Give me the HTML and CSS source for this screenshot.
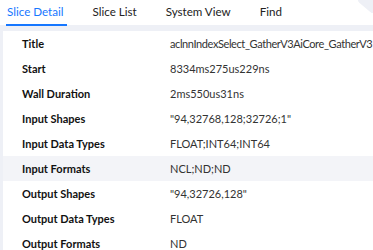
FILE: index.html
```html
<!doctype html>
<html lang="en">
  <head>
    <meta charset="UTF-8" />
    <meta name="viewport" content="width=device-width, initial-scale=1.0" />
    <title>Slice Detail</title>
    <link rel="stylesheet" href="styles.css">
  </head>
  <body>
    <div class="tabs">
      <div class="tab active">Slice Detail</div>
      <div class="tab">Slice List</div>
      <div class="tab">System View</div>
      <div class="tab">Find</div>
      <div class="corner"></div>
    </div>

    <div class="panel">
      <div class="detail">
        <div class="row"><span class="label">Title</span><span class="value title">aclnnIndexSelect_GatherV3AiCore_GatherV3</span></div>
        <div class="row"><span class="label">Start</span><span class="value">8334ms275us229ns</span></div>
        <div class="row"><span class="label">Wall Duration</span><span class="value">2ms550us31ns</span></div>
        <div class="row"><span class="label">Input Shapes</span><span class="value">"94,32768,128;32726;1"</span></div>
        <div class="row"><span class="label">Input Data Types</span><span class="value">FLOAT;INT64;INT64</span></div>
        <div class="row hover"><span class="label">Input Formats</span><span class="value">NCL;ND;ND</span></div>
        <div class="row"><span class="label">Output Shapes</span><span class="value">"94,32726,128"</span></div>
        <div class="row"><span class="label">Output Data Types</span><span class="value">FLOAT</span></div>
        <div class="row"><span class="label">Output Formats</span><span class="value">ND</span></div>
      </div>
    </div>
  </body>
</html>
```

FILE: styles.css
```css
body {
  margin: 0;
  background-color: #eef0f6;
  font-family: Lato, 'Noto Sans', sans-serif;
  overflow: hidden;
}

.tabs {
  position: relative;
  display: flex;
  height: 25px;
  padding-left: 7px;
  gap: 29px;
  background-color: #fff;
}

.tab {
  position: relative;
  font-size: 11.6px;
  line-height: 24px;
  color: #222;
}

.tab.active {
  color: #1677ff;
}

.tab.active::after {
  content: '';
  position: absolute;
  left: -1px;
  right: -3px;
  bottom: -1px;
  height: 2px;
  background-color: #1677ff;
}

/* 오른쪽 위 모서리 */
.corner {
  position: absolute;
  top: -12px;
  right: -10px;
  width: 22px;
  height: 22px;
  border-radius: 4px;
  background-color: #eef0f6;
  transform: rotate(40deg);
}

.panel {
  padding: 6px 0 0 3px;
}

.detail {
  background-color: #fff;
}

.row {
  display: grid;
  grid-template-columns: 148px 1fr;
  height: 25px;
  line-height: 25px;
  padding-left: 19px;
  white-space: nowrap;
}

.row.hover {
  background-color: #f3f4f8;
}

.label {
  font-size: 11px;
  font-weight: bold;
  color: #111;
}

.value {
  font-size: 11px;
  color: #333;
}

.value.title {
  letter-spacing: -0.4px;
}
```
